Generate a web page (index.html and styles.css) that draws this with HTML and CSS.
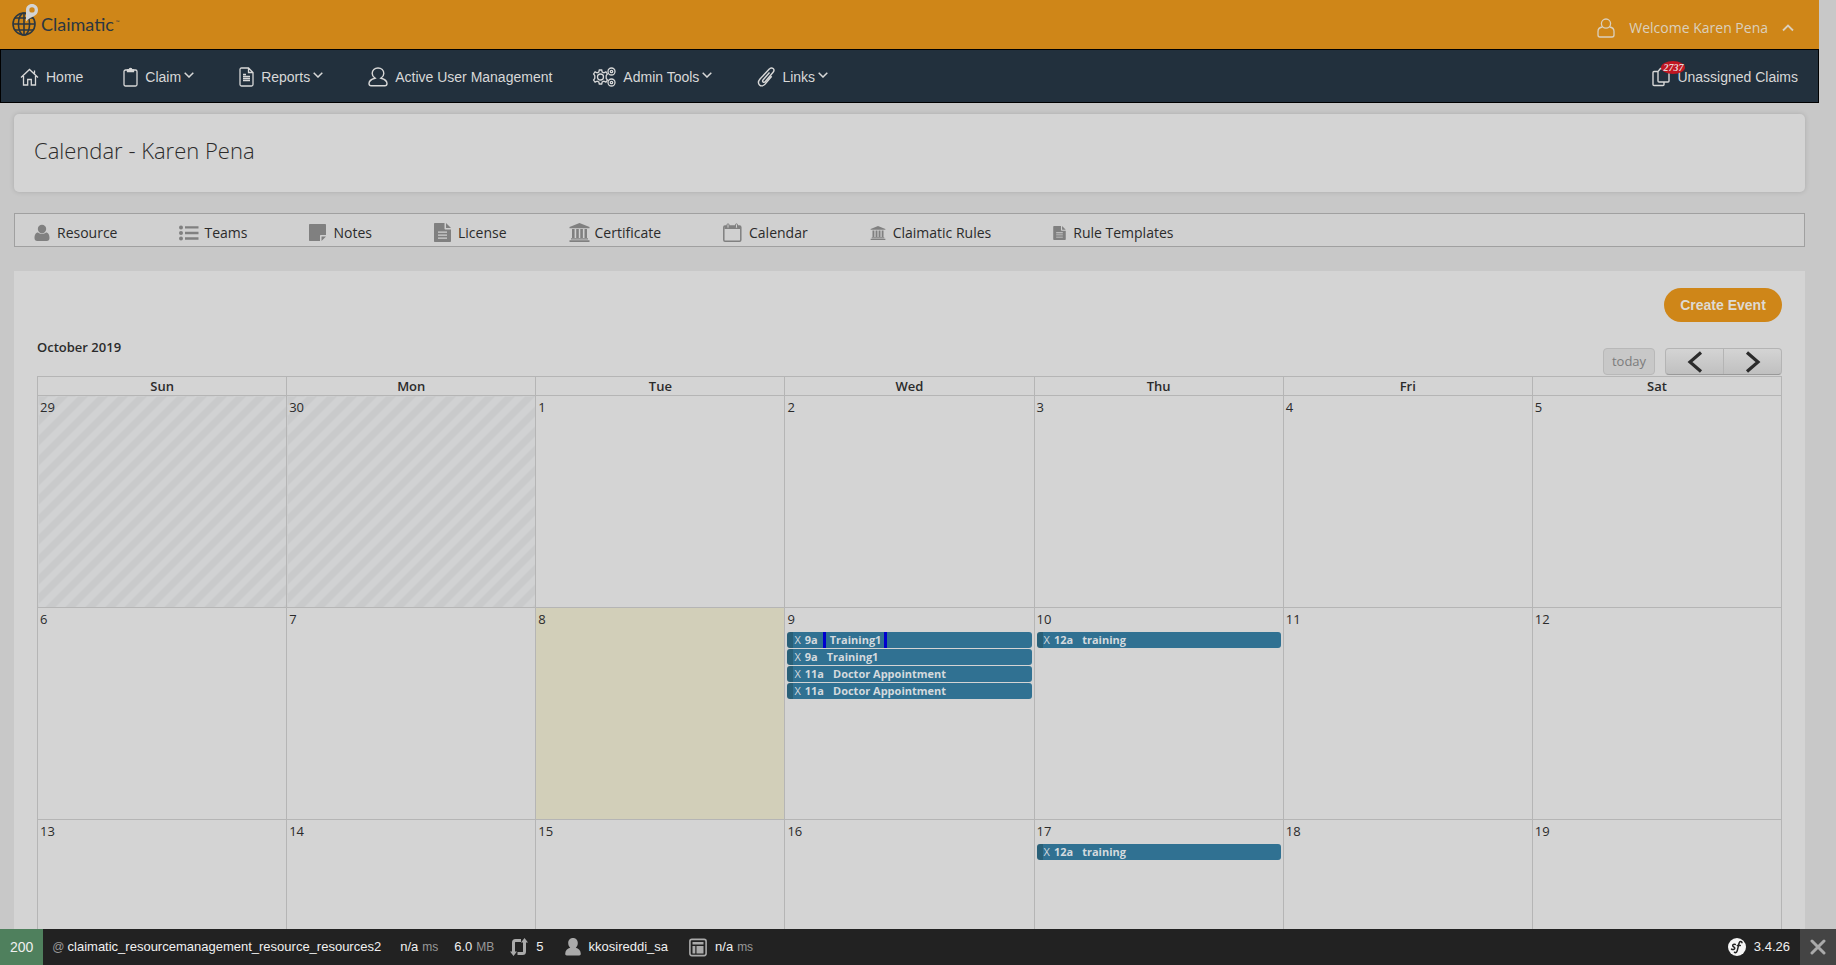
FILE: index.html
```html
<!DOCTYPE html>
<html lang="en">
<head>
<meta charset="utf-8">
<title>Calendar - Karen Pena</title>
<link rel="stylesheet" href="styles.css">
</head>
<body>
<div class="app">
  <header class="brandbar">
    <a class="logo" href="#">
      <svg class="logo-mark" width="28" height="34" viewBox="0 0 28 34" fill="none">
        <g stroke="#2b3741" stroke-width="1.600">
          <circle cx="12" cy="21" r="11"/>
          <ellipse cx="12" cy="21" rx="5.600" ry="11"/>
          <path d="M12 10v22M1 21h22M3 15h18M3 27h18"/>
        </g>
        <path fill="#d4d4d4" fill-rule="evenodd" d="M14 18.500V7C14 3.500 16.600 1 20 1s6 2.500 6 6c0 3.200-1.800 5.200-4.600 6.400-3.400 1.400-5.600 2.600-7.400 5.100zM20 4.200a2.700 2.700 0 1 0 0 5.400 2.700 2.700 0 0 0 0-5.400z"/>
      </svg>
      <span class="logo-name">Claimatic</span><span class="logo-tm">™</span>
    </a>
    <button class="welcome" type="button">
      <svg width="18" height="20" viewBox="0 0 18 20" fill="none" stroke="currentColor" stroke-width="1.300"><circle cx="9" cy="5.600" r="4.600"/><path d="M5.500 9C2.500 9.300 1 10.800 1 13.500V17c0 1.200.8 2 2 2h12c1.200 0 2-.8 2-2v-3.500c0-2.700-1.500-4.200-4.500-4.500"/></svg>
      <span>Welcome Karen Pena</span>
      <svg class="caret" width="12" height="8" viewBox="0 0 12 8" fill="none" stroke="currentColor" stroke-width="1.800"><path d="M1 6.500l5-5 5 5"/></svg>
    </button>
  </header>

  <nav class="mainnav">
    <a href="#"><svg width="19" height="18" viewBox="0 0 19 18" fill="none" stroke="currentColor" stroke-width="1.300"><path d="M1 9.500L9.500 1.500l8.500 8M3.500 8v9h4.200v-5.500h3.600V17h4.200V8M14.500 5.500V2.500"/></svg>Home</a>
    <a href="#"><svg width="15" height="20" viewBox="0 0 15 20" fill="none" stroke="currentColor" stroke-width="1.300"><rect x="1" y="3" width="13" height="16" rx="1.500"/><path fill="currentColor" d="M4.500 4.700V3h1.700c0-1 .5-1.700 1.300-1.700S8.800 2 8.800 3h1.700v1.700z"/></svg>Claim<svg class="down" width="10" height="6" viewBox="0 0 10 6" fill="none" stroke="currentColor" stroke-width="1.500"><path d="M.7.7L5 5 9.300.7"/></svg></a>
    <a href="#"><svg width="15" height="20" viewBox="0 0 15 20" fill="none" stroke="currentColor" stroke-width="1.300"><path d="M9.500 1H2.500C1.600 1 1 1.600 1 2.500v15c0 .9.6 1.500 1.500 1.500h10c.9 0 1.500-.6 1.500-1.500v-12zM9.500 1v4.500H14M4 9.500h7M4 11.500h7M4 13.500h7M4 7.500h3"/></svg>Reports<svg class="down" width="10" height="6" viewBox="0 0 10 6" fill="none" stroke="currentColor" stroke-width="1.500"><path d="M.7.7L5 5 9.300.7"/></svg></a>
    <a href="#"><svg width="20" height="20" viewBox="0 0 20 20" fill="none" stroke="currentColor" stroke-width="1.400"><path d="M7 11.200C5.200 10 4.200 8.500 4.200 6.600 4.200 3.400 6.600 1 10 1s5.800 2.400 5.800 5.600c0 1.900-1 3.400-2.800 4.600 3.800 1 6 2.700 6 5.300 0 1.500-.8 2.300-2.200 2.300H3.200C1.800 18.800 1 18 1 16.500c0-2.600 2.200-4.300 6-5.300z"/></svg>Active User Management</a>
    <a href="#"><svg width="24" height="20" viewBox="0 0 24 20" fill="none" stroke="currentColor" stroke-width="1.300"><circle cx="8.500" cy="10" r="3"/><path d="M7.300 3h2.400l.5 2 1.700.8 2-.9 1.500 2-1.200 1.700v2.800l1.200 1.700-1.500 2-2-.9-1.700.8-.5 2H7.300l-.5-2-1.700-.8-2 .9-1.500-2 1.200-1.700V8.600L1.600 6.900l1.500-2 2 .9L6.800 5z"/><circle cx="19.500" cy="4.500" r="1.200"/><circle cx="19.500" cy="15.500" r="1.200"/><circle cx="19.500" cy="4.500" r="3.500"/><circle cx="19.500" cy="15.500" r="3.500"/></svg>Admin Tools<svg class="down" width="10" height="6" viewBox="0 0 10 6" fill="none" stroke="currentColor" stroke-width="1.500"><path d="M.7.7L5 5 9.300.7"/></svg></a>
    <a href="#"><svg width="18" height="20" viewBox="0 0 18 20" fill="none" stroke="currentColor" stroke-width="1.400"><path d="M12.500 5.500L6 13c-.6.800-.5 1.500 0 2s1.500.4 2.100-.3l8-9.400c1.100-1.300 1-2.800 0-3.700s-2.700-.8-3.800.5L3 12c-1.800 2.200-2 4.400-.5 5.900s3.800 1.300 5.600-.8l6.600-7.800"/></svg>Links<svg class="down" width="10" height="6" viewBox="0 0 10 6" fill="none" stroke="currentColor" stroke-width="1.500"><path d="M.7.7L5 5 9.300.7"/></svg></a>
    <a class="unassigned" href="#"><svg width="18" height="20" viewBox="0 0 18 20" fill="none" stroke="currentColor" stroke-width="1.400"><path d="M8.500 1.500H16c.6 0 1 .4 1 1v11.500c0 .6-.4 1-1 1H7c-.6 0-1-.4-1-1V4.500zM5.500 4.500H2c-.6 0-1 .4-1 1V17.500c0 .6.400 1 1 1h9c.6 0 1-.4 1-1V15.500"/></svg>Unassigned Claims<span class="badge">2737</span></a>
  </nav>

  <main class="page">
    <section class="titlebox"><h1>Calendar - Karen Pena</h1></section>

    <nav class="tabs">
      <a href="#"><svg width="16" height="18" viewBox="0 0 16 18" fill="currentColor"><circle cx="8" cy="5" r="4.200"/><path d="M4 8.500C1.500 8.500.5 11 .5 14c0 1.800 1 3 2.700 3h9.600c1.700 0 2.700-1.200 2.700-3 0-3-1-5.500-3.500-5.500C10.500 10.300 5.500 10.300 4 8.500z"/></svg>Resource</a>
      <a class="tight" href="#"><svg width="20" height="16" viewBox="0 0 20 16" fill="currentColor"><circle cx="2" cy="2.500" r="2"/><circle cx="2" cy="8" r="2"/><circle cx="2" cy="13.500" r="2"/><path d="M6 1.200h13.500v2.400H6zM6 6.800h13.500v2.400H6zM6 12.300h13.500v2.400H6z"/></svg>Teams</a>
      <a href="#"><svg width="17" height="17" viewBox="0 0 17 17" fill="currentColor"><path d="M1 0h15c.6 0 1 .4 1 1v10h-5c-.6 0-1 .4-1 1v5H1c-.6 0-1-.4-1-1V1c0-.6.400-1 1-1zM12.500 12.500H17L12.500 17z"/></svg>Notes</a>
      <a href="#"><svg width="17" height="19" viewBox="0 0 17 19" fill="currentColor"><path fill-rule="evenodd" d="M1 0h9.500v5.500c0 .6.400 1 1 1H17V18c0 .6-.4 1-1 1H1c-.6 0-1-.4-1-1V1c0-.6.400-1 1-1zM4 8.500v1.200h9V8.500zm0 3v1.200h9v-1.200zm0 3v1.200h9v-1.200z"/><path d="M12 0l5 5h-5z"/></svg>License</a>
      <a class="tight" href="#"><svg width="21" height="19" viewBox="0 0 21 19" fill="currentColor"><path d="M10.500 0L20.500 4v1.200H.5V4zM3 6h2.600v9H3zM7.200 6h2.600v9H7.200zM11.300 6h2.600v9h-2.600zM15.500 6H18v9h-2.500zM2 15.300h17v1.200H2zM.5 17.300h20V19H.5z"/></svg>Certificate</a>
      <a href="#"><svg width="19" height="19" viewBox="0 0 19 19" fill="none" stroke="currentColor"><rect x=".8" y="3" width="17" height="15.200" rx="1.200" stroke-width="1.500"/><path stroke-width="3" d="M1.500 4.500h16"/><rect x="4" y=".8" width="2" height="4.500" rx="1" fill="#d0d0d0"/><rect x="12.500" y=".8" width="2" height="4.500" rx="1" fill="#d0d0d0"/></svg>Calendar</a>
      <a href="#"><svg width="16" height="14" viewBox="0 0 21 19" fill="currentColor"><path d="M10.500 0L20.500 4v1.200H.5V4zM3 6h2.600v9H3zM7.200 6h2.600v9H7.200zM11.300 6h2.600v9h-2.600zM15.500 6H18v9h-2.500zM2 15.300h17v1.200H2zM.5 17.300h20V19H.5z"/></svg>Claimatic Rules</a>
      <a href="#"><svg width="13" height="14" viewBox="0 0 17 19" fill="currentColor"><path fill-rule="evenodd" d="M1 0h9.500v5.500c0 .6.400 1 1 1H17V18c0 .6-.4 1-1 1H1c-.6 0-1-.4-1-1V1c0-.6.400-1 1-1zM4 8.500v1.200h9V8.500zm0 3v1.200h9v-1.200zm0 3v1.200h9v-1.200z"/><path d="M12 0l5 5h-5z"/></svg>Rule Templates</a>
    </nav>

    <section class="calendar">
      <div class="actions"><button class="create" type="button">Create Event</button></div>
      <div class="cal-head">
        <h2>October 2019</h2>
        <div class="cal-controls">
          <button class="today" type="button" disabled>today</button>
          <div class="pager">
            <button type="button" aria-label="Previous month"><svg width="16" height="22" viewBox="0 0 16 22" fill="none" stroke="#2b2b2b" stroke-width="3.200"><path d="M14 1.500L3 11l11 9.500"/></svg></button>
            <button type="button" aria-label="Next month"><svg width="16" height="22" viewBox="0 0 16 22" fill="none" stroke="#2b2b2b" stroke-width="3.200"><path d="M2 1.500L13 11 2 20.500"/></svg></button>
          </div>
        </div>
      </div>
      <table class="month">
        <thead><tr><th>Sun</th><th>Mon</th><th>Tue</th><th>Wed</th><th>Thu</th><th>Fri</th><th>Sat</th></tr></thead>
        <tbody>
          <tr><td class="off"><span class="day">29</span></td><td class="off"><span class="day">30</span></td><td><span class="day">1</span></td><td><span class="day">2</span></td><td><span class="day">3</span></td><td><span class="day">4</span></td><td><span class="day">5</span></td></tr>
          <tr><td><span class="day">6</span></td><td><span class="day">7</span></td><td class="now"><span class="day">8</span></td>
            <td><span class="day">9</span>
              <div class="event"><span>X</span><b>9a</b><b class="marked">Training1</b></div>
              <div class="event"><span>X</span><b>9a</b><b class="name">Training1</b></div>
              <div class="event"><span>X</span><b>11a</b><b class="name">Doctor Appointment</b></div>
              <div class="event"><span>X</span><b>11a</b><b class="name">Doctor Appointment</b></div>
            </td>
            <td><span class="day">10</span><div class="event"><span>X</span><b>12a</b><b class="name">training</b></div></td>
            <td><span class="day">11</span></td><td><span class="day">12</span></td></tr>
          <tr><td><span class="day">13</span></td><td><span class="day">14</span></td><td><span class="day">15</span></td><td><span class="day">16</span></td>
            <td><span class="day">17</span><div class="event"><span>X</span><b>12a</b><b class="name">training</b></div></td>
            <td><span class="day">18</span></td><td><span class="day">19</span></td></tr>
        </tbody>
      </table>
    </section>
  </main>
</div>

<footer class="debugbar">
  <span class="status">200</span>
  <span class="route"><i>@</i>claimatic_resourcemanagement_resource_resources2</span>
  <span class="cell">n/a <i>ms</i></span>
  <span class="cell">6.0 <i>MB</i></span>
  <span class="cell wide"><svg width="18" height="18" viewBox="0 0 18 18" fill="none" stroke="#aaa" stroke-width="3"><path d="M11 2.500H5.500c-1.300 0-2 .7-2 2V14M7.500 15.500h5c1.300 0 2-.7 2-2V4"/><path fill="#aaa" stroke="none" d="M0 13.500h7L3.500 18zM11 4.500h7L14.500 0z"/></svg>5</span>
  <span class="cell wide"><svg width="16" height="18" viewBox="0 0 16 18" fill="#aaa"><path d="M8 0c3 0 4.800 2.200 4.800 5 0 2-.8 3.500-2 4.800 2.700.7 5 2.700 5 6 0 1-.5 1.700-1.600 1.700H1.800C.7 17.500.2 16.800.2 15.800c0-3.300 2.300-5.300 5-6C4 8.500 3.200 7 3.200 5 3.200 2.200 5 0 8 0z"/></svg>kkosireddi_sa</span>
  <span class="cell wide"><svg width="18" height="19" viewBox="0 0 18 19" fill="#aaa"><rect x=".9" y="1.400" width="16.200" height="16.200" rx="2" fill="none" stroke="#aaa" stroke-width="1.600"/><path d="M3.500 4h11v2.500h-11zM3.500 8h2.800v7.500H3.500zM7.500 8h7v7.500h-7z"/></svg>n/a <i>ms</i></span>
  <span class="version"><svg width="18" height="18" viewBox="0 0 18 18"><circle cx="9" cy="9" r="9" fill="#f5f5f5"/><path fill="none" stroke="#222" stroke-width="1.500" stroke-linecap="round" d="M7.300 6.500C6 5.800 4.600 6.500 4.700 7.600c.1 1.200 2.200 1.300 2.100 2.700-.1 1.300-2.200 1.700-3.300.8M14 4.700c-.2-1.400-2-1.500-2.700-.1-.9 1.900-1.400 6.800-2.400 8.900-.5 1-1.500 1.500-2.400.8M9.300 7.500h3"/></svg>3.4.26</span>
  <button class="close" type="button" aria-label="Close toolbar"><svg width="16" height="16" viewBox="0 0 16 16" stroke="#aaa" stroke-width="3" stroke-linecap="round"><path d="M2 2l12 12M14 2L2 14"/></svg></button>
</footer>
</body>
</html>
```
FILE: styles.css
```css
* { box-sizing: border-box; }

html {
  overflow: hidden;
}

body {
  margin: 0;
  padding-right: 17px;
  background: #c8c8c8;
  color: #2b2b2b;
  font: 13px/17px "Open Sans", sans-serif;
}

a { color: inherit; text-decoration: none; }
button { margin: 0; padding: 0; border: 0; font: inherit; color: inherit; background: none; }
svg { display: block; flex: none; }
h1, h2 { margin: 0; }

.app {
  height: 100vh;
  overflow: hidden;
}

/* Brand bar */
.brandbar {
  display: flex;
  justify-content: space-between;
  height: 49px;
  background: #cf8618;
}

.logo {
  display: flex;
  align-items: flex-start;
  padding: 3px 0 0 12px;
  color: #2b3741;
}

.logo-name {
  padding: 9px 0 0 1px;
  font: 18px/24px Lato, sans-serif;
}

.logo-tm {
  padding: 15px 0 0 2px;
  font: 5px/8px Lato, sans-serif;
}

.welcome {
  display: flex;
  align-items: center;
  gap: 14px;
  padding: 6px 25px 0 0;
  color: #dbd0bd;
  font-size: 14px;
  line-height: 20px;
}

/* Main navigation */
.mainnav {
  display: flex;
  align-items: center;
  gap: 40px;
  height: 54px;
  padding: 1px 20px 0 19px;
  border: 1px solid #000;
  background: #22303d;
  color: #d8d8d8;
  font: 14px/20px "Liberation Sans", Arial, sans-serif;
}

.mainnav a {
  display: flex;
  align-items: center;
  gap: 7px;
}

.mainnav .down { margin: 0 5px 3px -4px; }

.mainnav .unassigned {
  position: relative;
  margin-left: auto;
}

.badge {
  position: absolute;
  top: -6px;
  left: 9px;
  padding: 0 2px;
  border-radius: 50%;
  background: #c01722;
  color: #e6d5d5;
  font: bold italic 10px/13px "Liberation Serif", serif;
}

/* Page */
.page {
  padding: 11px 14px 0;
}

.titlebox {
  height: 78px;
  padding: 19px 20px;
  border-radius: 5px;
  background: #d4d4d4;
  box-shadow: 0 0 5px rgba(0, 0, 0, .15);
}

.titlebox h1 {
  font-size: 22px;
  font-weight: 300;
  line-height: 34px;
}

.tabs {
  display: flex;
  align-items: center;
  gap: 62px;
  height: 34px;
  margin: 21px 0 24px;
  padding: 5px 19px 0;
  border: 1px solid #a0a0a0;
  background: #d0d0d0;
  font-size: 14px;
  line-height: 20px;
}

.tabs a {
  display: flex;
  align-items: center;
  gap: 7px;
}

.tabs .tight { gap: 5px; }
.tabs svg { color: #808080; }

/* Calendar */
.calendar {
  padding: 17px 23px 0;
  background: #d4d4d4;
}

.actions {
  display: flex;
  justify-content: flex-end;
}

.create {
  width: 118px;
  height: 34px;
  border-radius: 17px;
  background: #cf8618;
  color: #dedad2;
  font: bold 14px/20px "Liberation Sans", Arial, sans-serif;
}

.cal-head {
  display: flex;
  justify-content: space-between;
  height: 54px;
  padding-bottom: 1px;
}

.cal-head h2 {
  padding-top: 15px;
  font-size: 13px;
  font-weight: 600;
  line-height: 20px;
}

.cal-controls {
  display: flex;
  align-items: flex-end;
  gap: 10px;
}

.today {
  width: 52px;
  height: 27px;
  border: 1px solid #b8b8b8;
  border-radius: 4px;
  background: #c8c8c8;
  color: #7c7c7c;
}

.pager {
  display: flex;
  width: 117px;
  height: 27px;
  border: 1px solid #b4b4b4;
  border-bottom-color: #999;
  border-radius: 4px;
  background: linear-gradient(#d4d4d4, #c0c0c0);
}

.pager button {
  display: flex;
  flex: 1;
  align-items: center;
  justify-content: center;
}

.pager button + button { border-left: 1px solid #b4b4b4; }

.month {
  width: 100%;
  border-collapse: collapse;
  table-layout: fixed;
}

.month th,
.month td {
  border: 1px solid #b5b5b5;
}

.month th {
  height: 19px;
  padding: 0;
  font-weight: 600;
  line-height: 17px;
}

.month td {
  height: 212px;
  padding: 3px 2px 0;
  vertical-align: top;
}

.month .off {
  background: repeating-linear-gradient(135deg, #c9cacb 0 7px, #d1d2d3 7px 14px);
}

.month .now { background: #d2cfb9; }

.day {
  display: block;
  height: 21px;
}

.event {
  display: flex;
  height: 16px;
  margin-bottom: 1px;
  padding-left: 1px;
  border-left: 6px solid #296078;
  border-radius: 3px;
  background: #307192;
  color: #d4dade;
  font-size: 11px;
  line-height: 16px;
}

.event span { margin-right: 4px; }
.event .name { margin-left: 9px; }

.event .marked {
  margin-left: 5px;
  padding: 0 3px 0 4px;
  border: solid #0000d0;
  border-width: 0 3px;
}

/* Debug toolbar */
.debugbar {
  position: fixed;
  right: 0;
  bottom: 0;
  left: 0;
  display: flex;
  align-items: center;
  height: 36px;
  background: #222;
  color: #f0f0f0;
  font: 13px/18px "Liberation Sans", Arial, sans-serif;
}

.debugbar i { color: #999; font-style: normal; font-size: 12px; }

.status {
  align-self: stretch;
  padding: 0 10px;
  background: #4f805d;
  font-size: 14px;
  line-height: 36px;
}

.route {
  display: flex;
  gap: 3px;
  padding: 0 11px 0 9px;
}

.cell {
  display: flex;
  align-items: center;
  gap: 4px;
  padding: 0 8px;
}

.cell svg { margin-right: 4px; }
.cell.wide { padding-right: 13px; }

.version {
  display: flex;
  gap: 8px;
  align-items: center;
  margin-left: auto;
  padding-right: 10px;
}

.close {
  display: flex;
  align-items: center;
  align-self: stretch;
  justify-content: center;
  width: 36px;
  background: #444;
}
```
